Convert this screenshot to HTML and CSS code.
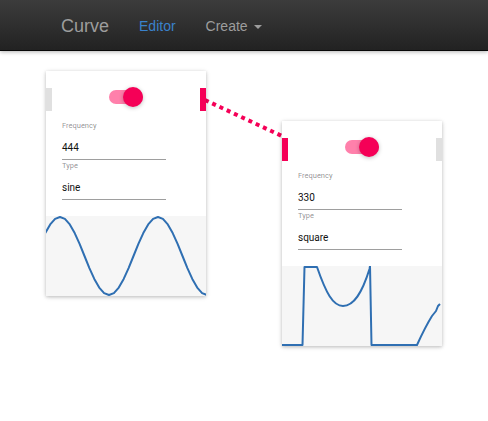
FILE: index.html
```html
<!DOCTYPE html>
<html>
<head>
<meta charset="utf-8">
<link rel="stylesheet" href="styles.css">
</head>
<body>
<nav class="navbar">
  <a class="brand">Curve</a>
  <a class="nav-link active">Editor</a>
  <a class="nav-link">Create <span class="caret"></span></a>
</nav>
<main class="canvas">
  <svg class="wire" width="488" height="370" viewBox="0 0 488 370">
    <line x1="205" y1="49" x2="284" y2="86" stroke="#f50057" stroke-width="4" stroke-dasharray="4 4"/>
  </svg>

  <section class="card card-a">
    <span class="port port-left port-in"></span>
    <span class="port port-right port-out"></span>
    <div class="toggle-row">
      <div class="toggle"><span class="track"></span><span class="knob"></span></div>
    </div>
    <div class="field">
      <div class="label">Frequency</div>
      <div class="value">444</div>
    </div>
    <div class="field">
      <div class="label">Type</div>
      <div class="value">sine</div>
    </div>
    <div class="chart">
      <svg width="160" height="80" viewBox="0 0 160 80">
        <polyline fill="none" stroke="#2f6fb2" stroke-width="2" stroke-linejoin="round" points="-0.7,17.08 4.2,8.45 9.1,2.91 14,1 18.9,2.91 23.8,8.45 28.7,17.08 33.6,27.95 38.5,40 43.4,52.05 48.3,62.92 53.2,71.55 58.1,77.09 63,79 67.9,77.09 72.8,71.55 77.7,62.92 82.6,52.05 87.5,40 92.4,27.95 97.3,17.08 102.2,8.45 107.1,2.91 112,1 116.9,2.91 121.8,8.45 126.7,17.08 131.6,27.95 136.5,40 141.4,52.05 146.3,62.92 151.2,71.55 156.1,77.09 161,79"/>
      </svg>
    </div>
  </section>

  <section class="card card-b">
    <span class="port port-left port-out"></span>
    <span class="port port-right port-in"></span>
    <div class="toggle-row">
      <div class="toggle"><span class="track"></span><span class="knob"></span></div>
    </div>
    <div class="field">
      <div class="label">Frequency</div>
      <div class="value">330</div>
    </div>
    <div class="field">
      <div class="label">Type</div>
      <div class="value">square</div>
    </div>
    <div class="chart">
      <svg width="160" height="80" viewBox="0 0 160 80">
        <path fill="none" stroke="#2f6fb2" stroke-width="2" stroke-linejoin="round" d="M-1,79 L20.5,79 L22.5,1 L35,1 C44,27 51,40 61,40 C72,40 80,27 87.5,3 L88,0 L89.5,79 L135,79 C140,68 145,58 150,50 L154,45 L156,40 L158,38"/>
      </svg>
    </div>
  </section>
</main>
</body>
</html>
```
FILE: styles.css
```css
html, body {
  margin: 0;
  padding: 0;
  background: #fff;
}

.navbar {
  height: 50px;
  display: flex;
  align-items: center;
  padding-left: 46px;
  background: linear-gradient(to bottom, #3c3c3c 0, #222 100%);
  border-bottom: 1px solid #080808;
  box-shadow: 0 1px 4px rgba(0, 0, 0, 0.3);
  font-family: "Liberation Sans", Arial, sans-serif;
  position: relative;
  z-index: 2;
}

.brand {
  padding: 1px 15px 0;
  font-size: 18px;
  line-height: 20px;
  color: #9d9d9d;
}

.nav-link {
  padding: 2px 15px 0;
  font-size: 14px;
  line-height: 20px;
  color: #9d9d9d;
}

.nav-link.active {
  color: #3a82cc;
}

.caret {
  display: inline-block;
  width: 0;
  height: 0;
  margin-left: 2px;
  vertical-align: middle;
  border-top: 4px solid #9d9d9d;
  border-left: 4px solid transparent;
  border-right: 4px solid transparent;
}

.canvas {
  position: relative;
  height: 370px;
}

.wire {
  position: absolute;
  left: 0;
  top: 0;
}

.card {
  position: absolute;
  width: 160px;
  height: 225px;
  background: #fff;
  box-shadow: 0 1px 5px rgba(0, 0, 0, 0.14), 0 1px 3px rgba(0, 0, 0, 0.16);
  font-family: Roboto, "Noto Sans", sans-serif;
  display: flex;
  flex-direction: column;
}

.card-a { left: 46px; top: 20px; }
.card-b { left: 282px; top: 70px; }

.port {
  position: absolute;
  top: 17px;
  width: 6px;
  height: 23px;
}
.port-left { left: 0; }
.port-right { right: 0; }
.port-in { background: #e0e0e0; }
.port-out { background: #f50057; }

.toggle-row {
  height: 49px;
  display: flex;
  justify-content: center;
  align-items: center;
  padding-top: 2px;
  box-sizing: border-box;
}

.toggle {
  position: relative;
  width: 34px;
  height: 20px;
  display: flex;
  align-items: center;
}

.track {
  width: 34px;
  height: 14px;
  border-radius: 7px;
  background: #ff80ab;
}

.knob {
  position: absolute;
  right: 0;
  top: 0;
  width: 20px;
  height: 20px;
  border-radius: 50%;
  background: #f50057;
  box-shadow: 0 1px 4px rgba(0, 0, 0, 0.25);
}

.field {
  margin-left: 16px;
  width: 104px;
}

.label {
  font-size: 7.5px;
  line-height: 11px;
  height: 11px;
  color: rgba(0, 0, 0, 0.45);
}

.value {
  font-size: 10px;
  line-height: 14px;
  padding-top: 10px;
  padding-bottom: 4px;
  border-bottom: 1px solid #9e9e9e;
  color: #111;
}

.chart {
  margin-top: 16px;
  height: 80px;
  background: #f6f6f6;
  overflow: hidden;
}

.chart svg {
  display: block;
}
```
